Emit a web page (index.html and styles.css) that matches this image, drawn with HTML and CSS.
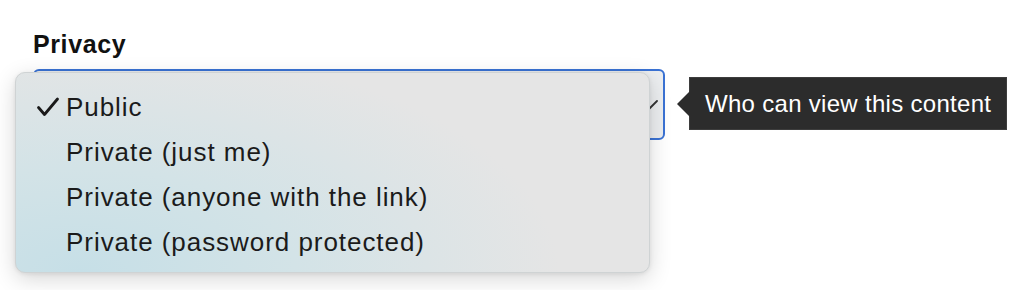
FILE: index.html
```html
<!DOCTYPE html>
<html lang="en">
<head>
    <meta charset="UTF-8">
    <title>Privacy</title>
    <link rel="stylesheet" href="styles.css">
</head>
<body>
    <div class="field">
        <label class="field-label" for="privacy">Privacy</label>
        <div class="field-row">
            <div class="select" id="privacy">
                <svg class="chevron" width="18" height="10" viewBox="0 0 18 10">
                    <path d="M1 1 L9 9 L17 1" fill="none" stroke="#333" stroke-width="1.8" stroke-linecap="round" stroke-linejoin="round"/>
                </svg>
            </div>
            <div class="tooltip">Who can view this content</div>
            <ul class="menu">
                <li class="menu-item selected">
                    <svg class="check" width="24" height="20" viewBox="0 0 24 20">
                        <path d="M2.5 10.5 L8.5 17.5 L21.5 2" fill="none" stroke="#1a1a1a" stroke-width="2.8" stroke-linecap="round" stroke-linejoin="round"/>
                    </svg>
                    Public
                </li>
                <li class="menu-item">Private (just me)</li>
                <li class="menu-item">Private (anyone with the link)</li>
                <li class="menu-item">Private (password protected)</li>
            </ul>
        </div>
    </div>
</body>
</html>
```

FILE: styles.css
```css
html, body {
    height: 100%;
}
body {
    margin: 0;
    background-color: #fff;
    font-family: "Liberation Sans", Arial, sans-serif;
    color: #1b1b1b;
}
.field {
    box-sizing: border-box;
    min-height: 290px;
    padding: 29px 0 0 33px;
}
.field-label {
    display: block;
    font-size: 25px;
    line-height: 30px;
    font-weight: bold;
    color: #111;
    letter-spacing: 0.6px;
    margin-bottom: 10px;
}
.field-row {
    position: relative;
    display: flex;
    align-items: center;
}
.select {
    position: relative;
    box-sizing: border-box;
    width: 632px;
    height: 71px;
    border: 2px solid #3a72d4;
    border-radius: 6px;
    background-color: #eceef0;
}
.chevron {
    position: absolute;
    right: 5px;
    top: 29px;
}
.menu {
    position: absolute;
    left: -18px;
    top: 3px;
    z-index: 2;
    width: 635px;
    height: 201px;
    box-sizing: border-box;
    margin: 0;
    padding: 12px 0 0 0;
    list-style: none;
    border-radius: 10px;
    border: 1px solid #cfd3d4;
    background: radial-gradient(ellipse 480px 230px at 10% 100%, #c6dfe7 0%, #d3e3e7 45%, rgba(229,229,229,0) 100%), #e5e5e5;
    box-shadow: 0 6px 22px rgba(0,0,0,0.16), 0 1px 4px rgba(0,0,0,0.08);
}
.menu-item {
    position: relative;
    padding-left: 50px;
    height: 45px;
    line-height: 45px;
    font-size: 26px;
    letter-spacing: 0.95px;
}
.check {
    position: absolute;
    left: 20px;
    top: 12px;
}
.tooltip {
    position: relative;
    margin-left: 24px;
    margin-top: -2px;
    background-color: #2c2c2c;
    border: 1px solid #3d3d3d;
    color: #fff;
    font-size: 24px;
    letter-spacing: 0.3px;
    line-height: 51px;
    padding: 0 15px;
}
.tooltip::before {
    content: "";
    position: absolute;
    left: -13px;
    top: 13px;
    border-top: 13px solid transparent;
    border-bottom: 13px solid transparent;
    border-right: 13px solid #2c2c2c;
}
```
